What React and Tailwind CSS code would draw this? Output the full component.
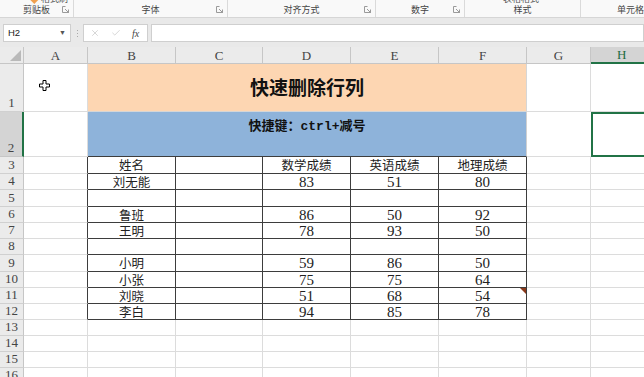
import { X, Check } from "lucide-react";

const COLS = ["A", "B", "C", "D", "E", "F", "G", "H"];
const COL_W = ["w-[64px]", "w-[88px]", "w-[87px]", "w-[88px]", "w-[88px]", "w-[88px]", "w-[64px]", "w-[80px]"];

const TABLE = [
  { n: 3, h: "h-[17px]", cells: ["姓名", "", "数学成绩", "英语成绩", "地理成绩"] },
  { n: 4, h: "h-[16px]", cells: ["刘无能", "", "83", "51", "80"] },
  { n: 5, h: "h-[17px]", cells: ["", "", "", "", ""] },
  { n: 6, h: "h-[16px]", cells: ["鲁班", "", "86", "50", "92"] },
  { n: 7, h: "h-[16px]", cells: ["王明", "", "78", "93", "50"] },
  { n: 8, h: "h-[16px]", cells: ["", "", "", "", ""] },
  { n: 9, h: "h-[17px]", cells: ["小明", "", "59", "86", "50"] },
  { n: 10, h: "h-[16px]", cells: ["小张", "", "75", "75", "64"] },
  { n: 11, h: "h-[16px]", cells: ["刘晓", "", "51", "68", "54"], note: true },
  { n: 12, h: "h-[16px]", cells: ["李白", "", "94", "85", "78"] },
];

const EMPTY_ROWS = [13, 14, 15, 16];

const RIBBON = [
  { w: "w-[74px]", label: "剪贴板", launcher: true },
  { w: "w-[154px]", label: "字体", launcher: true },
  { w: "w-[148px]", label: "对齐方式", launcher: true },
  { w: "w-[89px]", label: "数字", launcher: true },
  { w: "w-[116px]", label: "样式" },
  { w: "w-[100px]", label: "单元格" },
];

function Launcher() {
  return (
    <svg width="7" height="7" viewBox="0 0 7 7" className="absolute right-[4px] bottom-[4px]">
      <path d="M0.5 0.5h3M0.5 0.5v6h6v-3" stroke="#9a9a9a" fill="none" strokeWidth="1" />
      <path d="M3 3l3.5 3.5M4 6.5h2.5v-2.5" stroke="#9a9a9a" fill="none" strokeWidth="1" />
    </svg>
  );
}

function Ribbon() {
  return (
    <div className="flex h-[18px] overflow-hidden border-b border-[#d6d6d6] bg-[#f9f9f9] font-['Noto_Sans_CJK_SC',sans-serif]">
      {RIBBON.map((g, i) => (
        <div key={i} className={`relative shrink-0 ${g.w} border-r border-[#dadada]`}>
          {i === 0 && (
            <div className="absolute left-[32px] top-[-8px] flex items-center gap-[3px] text-[9px] text-[#555]">
              <span className="inline-block h-[8px] w-[6px] rotate-45 bg-[#f0a050]" />
              格式刷
            </div>
          )}
          {i === 4 && (
            <div className="absolute left-[38px] top-[-8px] text-[9px] text-[#555]">表格格式</div>
          )}
          <div className="absolute bottom-[2px] left-0 right-0 text-center text-[9px] leading-[11px] text-[#444]">
            {g.label}
          </div>
          {g.launcher && <Launcher />}
        </div>
      ))}
    </div>
  );
}

function FormulaBar() {
  return (
    <div className="flex h-[29px] items-start bg-[#e9e9e9] pt-[6px] pl-[3px]">
      <div className="flex h-[18px] w-[68px] shrink-0 items-center justify-between border border-[#cfcfcf] bg-white px-[4px] font-['Liberation_Sans',sans-serif] text-[9.5px] text-[#222]">
        <span>H2</span>
        <span className="text-[7px] text-[#555]">▼</span>
      </div>
      <div className="flex h-[18px] w-[12px] shrink-0 flex-col items-center justify-center gap-[2px]">
        <span className="h-[1px] w-[1px] bg-[#aaa]" />
        <span className="h-[1px] w-[1px] bg-[#aaa]" />
        <span className="h-[1px] w-[1px] bg-[#aaa]" />
      </div>
      <div className="flex h-[18px] w-[65px] shrink-0 items-center border border-[#cfcfcf] bg-white pl-[6px] text-[#b5b5b5]">
        <X size={10} strokeWidth={1.3} />
        <Check size={10} strokeWidth={1.3} className="ml-[11px]" />
        <span className="ml-[11px] font-['Liberation_Serif'] text-[10px] italic text-[#444]">fx</span>
      </div>
      <div className="ml-[3px] h-[18px] flex-1 border border-[#cfcfcf] bg-white" />
    </div>
  );
}

function ColumnHeader() {
  return (
    <div className="flex h-[17px] bg-[#ebebeb] font-['Liberation_Serif'] text-[13px] text-[#444]">
      <div className="flex w-[24px] shrink-0 items-end justify-end border-r border-b border-[#c6c6c6] p-[2px]">
        <svg width="11" height="11" viewBox="0 0 11 11">
          <polygon points="11,0 11,11 0,11" fill="#b9b9b9" />
        </svg>
      </div>
      {COLS.map((c, i) =>
        c === "H" ? (
          <div key={c} className={`${COL_W[i]} shrink-0 border-r border-[#c6c6c6] border-b-2 border-b-[#217346] bg-[#d4d4d4] pl-[26px] leading-[16px] text-[#1e6b42]`}>
            {c}
          </div>
        ) : (
          <div key={c} className={`${COL_W[i]} flex shrink-0 items-center justify-center border-r border-b border-[#c6c6c6] leading-none`}>
            {c}
          </div>
        )
      )}
    </div>
  );
}

function RowHead({ n, selected }) {
  return (
    <div
      className={`flex w-[24px] shrink-0 items-end justify-center overflow-hidden border-b pb-[1px] font-['Liberation_Serif'] text-[13px] leading-[14px] text-[#444] ${
        selected
          ? "border-r-2 border-r-[#217346] border-b-[#c6c6c6] bg-[#d4d4d4]"
          : "border-r border-r-[#c6c6c6] border-b-[#d0d0d0] bg-[#ebebeb]"
      }`}
    >
      {n}
    </div>
  );
}

function Cursor() {
  return (
    <svg width="11" height="11" viewBox="0 0 11 11" className="absolute left-[15px] top-[16px]">
      <path d="M4 0.5H7V4H10.5V7H7V10.5H4V7H0.5V4H4Z" fill="white" stroke="black" strokeWidth="1" />
    </svg>
  );
}

export default function App() {
  return (
    <div className="h-[377px] w-[644px] overflow-hidden bg-white font-['Liberation_Serif','Noto_Sans_CJK_SC',serif]">
      <Ribbon />
      <FormulaBar />
      <ColumnHeader />

      {/* row 1: title */}
      <div className="flex h-[48px]">
        <RowHead n={1} />
        <div className="relative w-[64px] shrink-0 border-r border-b border-[#dcdcdc]">
          <Cursor />
        </div>
        <div className="flex w-[439px] shrink-0 items-center justify-center border-r border-b border-[#d6d6d6] bg-[#fdd6b2] pb-[1px] font-['Noto_Sans_CJK_SC',sans-serif] text-[19px] font-bold text-[#111]">
          快速删除行列
        </div>
        <div className="w-[64px] shrink-0 border-r border-b border-[#dcdcdc]" />
        <div className="w-[80px] shrink-0 border-b border-[#dcdcdc]" />
      </div>

      {/* row 2: shortcut */}
      <div className="flex h-[45px]">
        <RowHead n={2} selected />
        <div className="w-[64px] shrink-0 border-r border-b border-[#dcdcdc]" />
        <div className="flex w-[439px] shrink-0 justify-center border-r border-r-[#d0d0d0] border-b border-b-[#3d3d3d] bg-[#8eb3da] pt-[6px] font-['Liberation_Mono','Noto_Sans_CJK_SC',monospace] text-[13px] font-bold leading-[17px] text-[#111]">
          快捷键：ctrl+减号
        </div>
        <div className="w-[64px] shrink-0 border-b border-[#dcdcdc]" />
        <div className="w-[80px] shrink-0 border-2 border-[#217346]" />
      </div>

      {TABLE.map((row) => (
        <div key={row.n} className={`flex ${row.h}`}>
          <RowHead n={row.n} />
          <div className="w-[64px] shrink-0 border-r border-r-[#3d3d3d] border-b border-b-[#dcdcdc]" />
          {row.cells.map((v, i) => (
            <div
              key={i}
              className={`relative ${COL_W[i + 1]} flex shrink-0 items-center justify-center overflow-visible border-r border-b border-[#3d3d3d] leading-[14px] text-[#222] ${
                /^\d+$/.test(v) ? "text-[15px]" : "font-['Noto_Sans_CJK_SC',sans-serif] text-[12.5px]"
              }`}
            >
              {v}
              {row.note && i === 4 && (
                <span className="absolute right-0 top-0 h-0 w-0 border-l-[6px] border-t-[6px] border-l-transparent border-t-[#8a3a1c]" />
              )}
            </div>
          ))}
          <div className="w-[64px] shrink-0 border-r border-b border-[#dcdcdc]" />
          <div className="w-[80px] shrink-0 border-b border-[#dcdcdc]" />
        </div>
      ))}

      {EMPTY_ROWS.map((n) => (
        <div key={n} className="flex h-[16px]">
          <RowHead n={n} />
          {COL_W.map((w, i) => (
            <div key={i} className={`${w} shrink-0 border-r border-b border-[#dcdcdc]`} />
          ))}
        </div>
      ))}
    </div>
  );
}
